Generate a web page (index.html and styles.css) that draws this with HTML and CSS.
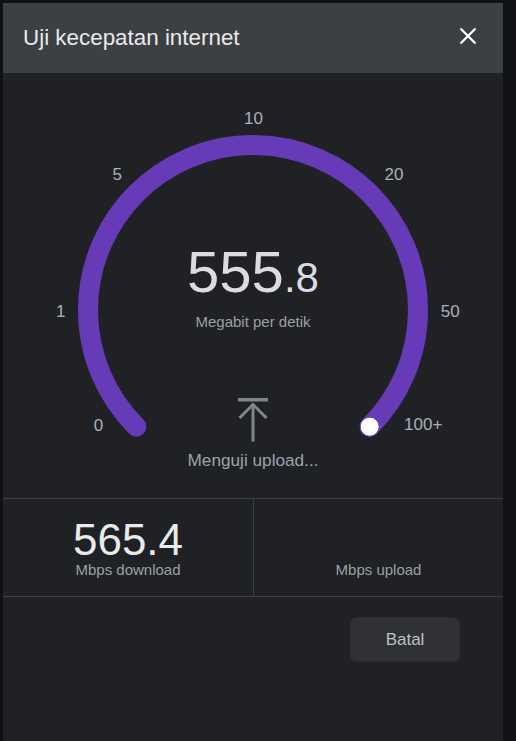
FILE: index.html
```html
<!DOCTYPE html>
<html lang="id">
<head>
<meta charset="utf-8">
<title>Uji kecepatan internet</title>
<link rel="stylesheet" href="styles.css">
</head>
<body>
<div class="dialog">
  <header class="header">
    <h1 class="title">Uji kecepatan internet</h1>
    <button class="close" aria-label="Tutup">
      <svg width="18" height="18" viewBox="0 0 18 18"><path d="M1.5 1.5L16.5 16.5M16.5 1.5L1.5 16.5" stroke="#ffffff" stroke-width="2.2" stroke-linecap="butt"/></svg>
    </button>
  </header>

  <section class="gauge">
    <svg class="gauge-svg" width="500" height="425" viewBox="0 0 500 425">
      <path d="M133.33 353.67 A165 165 0 1 1 366.67 353.67" fill="none" stroke="#673ab7" stroke-width="20" stroke-linecap="round"/>
      <circle cx="366.67" cy="353.67" r="9.5" fill="#ffffff" stroke="#673ab7" stroke-width="1"/>
      <g class="ticks" text-anchor="middle">
        <text x="95.5" y="357.7">0</text>
        <text x="57.7" y="244.3">1</text>
        <text x="114.2" y="107">5</text>
        <text x="250.5" y="51.3">10</text>
        <text x="391" y="107">20</text>
        <text x="447.2" y="243.7">50</text>
        <text x="420.2" y="357">100+</text>
      </g>
    </svg>
    <div class="readout">
      <div class="speed"><span class="speed-int">555</span><span class="speed-dec">.8</span></div>
      <div class="unit">Megabit per detik</div>
      <svg class="upload-icon" width="30" height="44" viewBox="0 0 30 44">
        <rect x="0" y="0" width="30" height="3.5" fill="#80868b"/>
        <path d="M15 5.5V43.5" stroke="#80868b" stroke-width="3" fill="none"/>
        <path d="M1.5 20L15 6.5L28.5 20" stroke="#80868b" stroke-width="3" fill="none"/>
      </svg>
      <div class="status">Menguji upload...</div>
    </div>
  </section>

  <section class="stats">
    <div class="stat">
      <div class="stat-value">565.4</div>
      <div class="stat-label">Mbps download</div>
    </div>
    <div class="stat">
      <div class="stat-value"></div>
      <div class="stat-label">Mbps upload</div>
    </div>
  </section>

  <footer class="footer">
    <button class="btn">Batal</button>
  </footer>
</div>
</body>
</html>
```
FILE: styles.css
```css
html, body {
  margin: 0;
  padding: 0;
  height: 100%;
  overflow: hidden;
}
body {
  background: #0f1114;
  font-family: "Liberation Sans", Arial, sans-serif;
}
.dialog {
  margin: 3px 0 0 3px;
  width: 500px;
  height: 738px;
  background: #202124;
  display: flex;
  flex-direction: column;
}
.header {
  height: 70px;
  flex: none;
  background: #3c4043;
  display: flex;
  align-items: center;
  justify-content: space-between;
  padding: 0 26px 0 20px;
  box-sizing: border-box;
}
.title {
  margin: 0;
  font-size: 22.4px;
  font-weight: 400;
  color: #e8eaed;
}
.close {
  border: 0;
  background: transparent;
  padding: 0;
  width: 18px;
  height: 18px;
  margin-bottom: 5px;
  display: block;
}
.close svg { display: block; }

.gauge {
  position: relative;
  height: 425px;
  flex: none;
}
.gauge-svg {
  position: absolute;
  left: 0;
  top: 0;
}
.ticks {
  font-family: "Liberation Sans", Arial, sans-serif;
  font-size: 17px;
  fill: #aab1bc;
}
.readout {
  position: relative;
  display: flex;
  flex-direction: column;
  align-items: center;
  padding-top: 170px;
}
.speed {
  height: 58px;
  line-height: 58px;
  color: #dadce0;
  white-space: nowrap;
}
.speed-int {
  font-size: 58px;
}
.speed-dec {
  font-size: 42px;
}
.unit {
  margin-top: 11.5px;
  font-size: 15px;
  line-height: 18px;
  color: #9aa0a6;
}
.upload-icon {
  display: block;
  margin-top: 67.5px;
}
.status {
  margin-top: 8px;
  font-size: 17.2px;
  line-height: 20px;
  color: #9aa3b0;
}

.stats {
  display: grid;
  grid-template-columns: 1fr 1fr;
  border-top: 1px solid #3c4043;
  border-bottom: 1px solid #3c4043;
}
.stat {
  display: flex;
  flex-direction: column;
  align-items: center;
  padding: 19px 0 19px;
}
.stat + .stat {
  border-left: 1px solid #3c4043;
}
.stat-value {
  height: 44px;
  font-size: 44px;
  line-height: 44px;
  color: #e8eaed;
}
.stat-label {
  font-size: 15px;
  line-height: 15px;
  color: #9aa0a6;
}

.footer {
  display: flex;
  justify-content: flex-end;
  padding: 20px 43px 0 0;
}
.btn {
  width: 110px;
  height: 45px;
  border: 1px solid #2a2b2e;
  border-radius: 6px;
  background: #303134;
  color: #bdc1c6;
  font-family: "Liberation Sans", Arial, sans-serif;
  font-size: 17px;
}
```
